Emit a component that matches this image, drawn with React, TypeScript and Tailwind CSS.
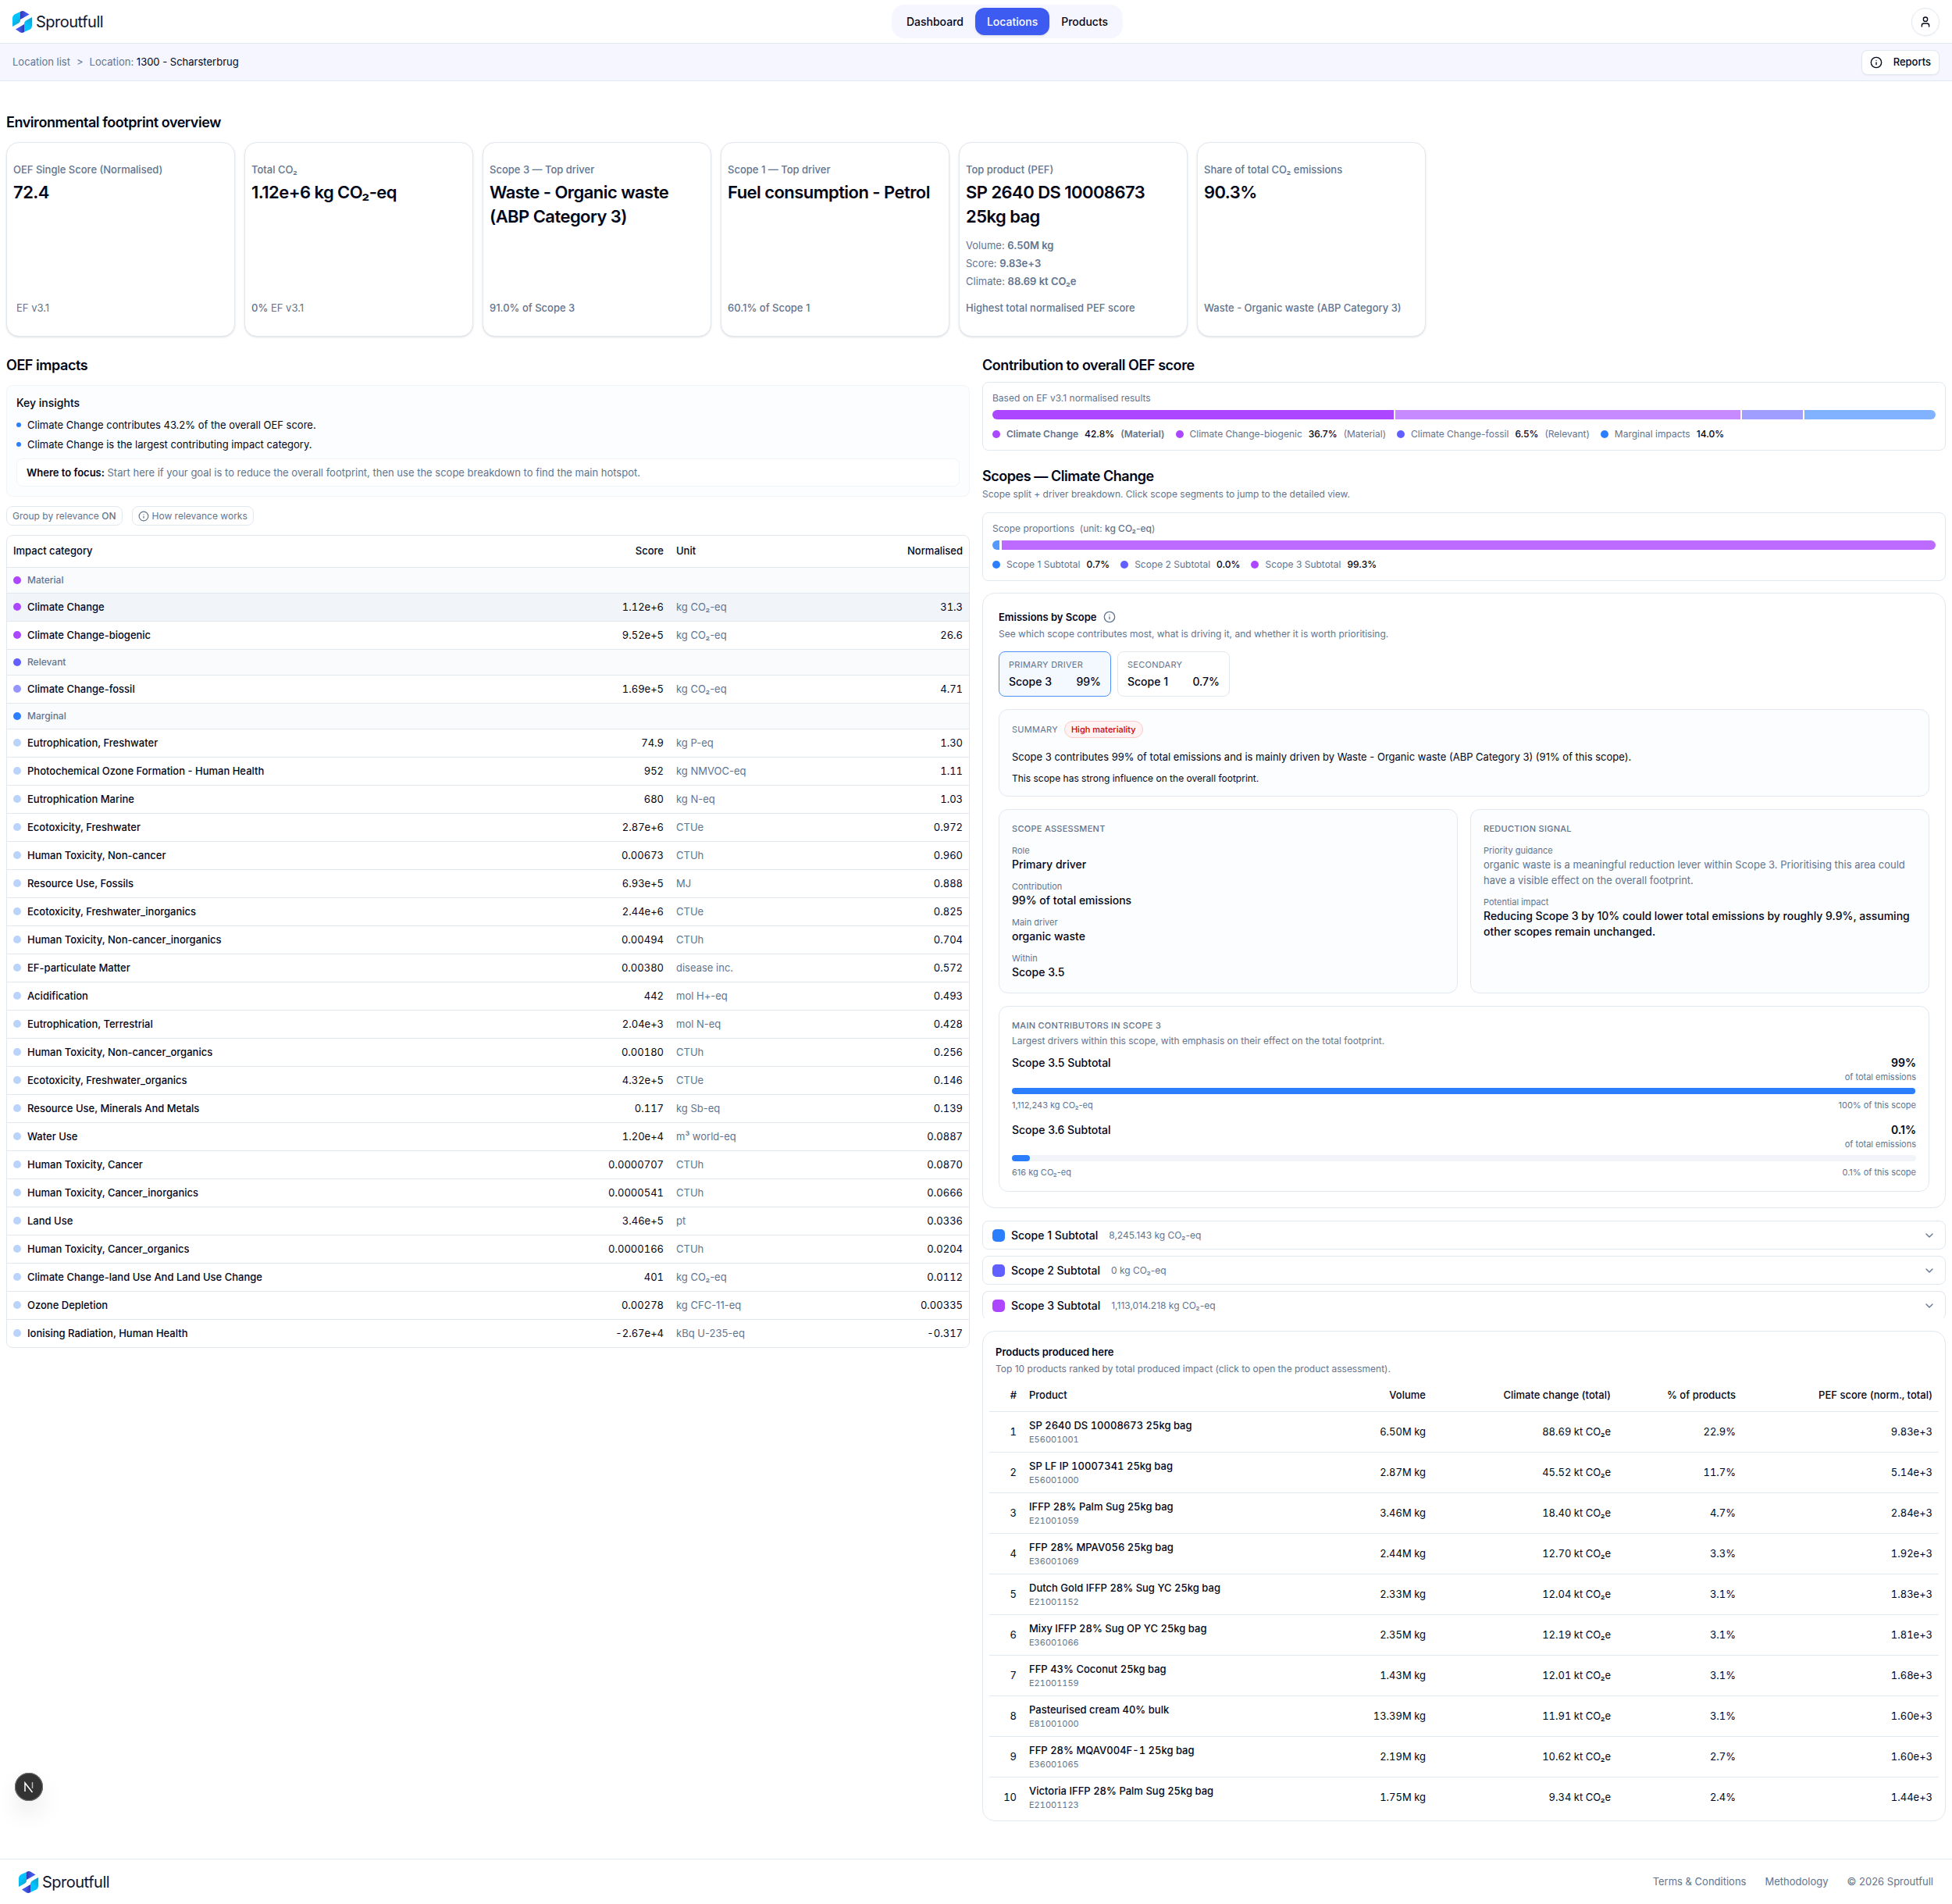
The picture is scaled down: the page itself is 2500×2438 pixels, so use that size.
import { ReactNode } from "react";
import { ChevronDown, Info, User } from "lucide-react";

type Impact = [string, string, string, string];

const material: Impact[] = [
  ["Climate Change", "1.12e+6", "kg CO₂-eq", "31.3"],
  ["Climate Change-biogenic", "9.52e+5", "kg CO₂-eq", "26.6"],
];

const relevant: Impact[] = [
  ["Climate Change-fossil", "1.69e+5", "kg CO₂-eq", "4.71"],
];

const marginal: Impact[] = [
  ["Eutrophication, Freshwater", "74.9", "kg P-eq", "1.30"],
  ["Photochemical Ozone Formation - Human Health", "952", "kg NMVOC-eq", "1.11"],
  ["Eutrophication Marine", "680", "kg N-eq", "1.03"],
  ["Ecotoxicity, Freshwater", "2.87e+6", "CTUe", "0.972"],
  ["Human Toxicity, Non-cancer", "0.00673", "CTUh", "0.960"],
  ["Resource Use, Fossils", "6.93e+5", "MJ", "0.888"],
  ["Ecotoxicity, Freshwater_inorganics", "2.44e+6", "CTUe", "0.825"],
  ["Human Toxicity, Non-cancer_inorganics", "0.00494", "CTUh", "0.704"],
  ["EF-particulate Matter", "0.00380", "disease inc.", "0.572"],
  ["Acidification", "442", "mol H+-eq", "0.493"],
  ["Eutrophication, Terrestrial", "2.04e+3", "mol N-eq", "0.428"],
  ["Human Toxicity, Non-cancer_organics", "0.00180", "CTUh", "0.256"],
  ["Ecotoxicity, Freshwater_organics", "4.32e+5", "CTUe", "0.146"],
  ["Resource Use, Minerals And Metals", "0.117", "kg Sb-eq", "0.139"],
  ["Water Use", "1.20e+4", "m³ world-eq", "0.0887"],
  ["Human Toxicity, Cancer", "0.0000707", "CTUh", "0.0870"],
  ["Human Toxicity, Cancer_inorganics", "0.0000541", "CTUh", "0.0666"],
  ["Land Use", "3.46e+5", "pt", "0.0336"],
  ["Human Toxicity, Cancer_organics", "0.0000166", "CTUh", "0.0204"],
  ["Climate Change-land Use And Land Use Change", "401", "kg CO₂-eq", "0.0112"],
  ["Ozone Depletion", "0.00278", "kg CFC-11-eq", "0.00335"],
  ["Ionising Radiation, Human Health", "-2.67e+4", "kBq U-235-eq", "-0.317"],
];

const groups = [
  { name: "Material", dot: "bg-[#ad46ff]", rowDot: "bg-[#ad46ff]", rows: material },
  { name: "Relevant", dot: "bg-[#615fff]", rowDot: "bg-[#9694ff]", rows: relevant },
  { name: "Marginal", dot: "bg-[#2b7fff]", rowDot: "bg-[#bad3fb]", rows: marginal },
];

const products = [
  ["SP 2640 DS 10008673 25kg bag", "E56001001", "6.50M kg", "88.69 kt CO₂e", "22.9%", "9.83e+3"],
  ["SP LF IP 10007341 25kg bag", "E56001000", "2.87M kg", "45.52 kt CO₂e", "11.7%", "5.14e+3"],
  ["IFFP 28% Palm Sug 25kg bag", "E21001059", "3.46M kg", "18.40 kt CO₂e", "4.7%", "2.84e+3"],
  ["FFP 28% MPAV056 25kg bag", "E36001069", "2.44M kg", "12.70 kt CO₂e", "3.3%", "1.92e+3"],
  ["Dutch Gold IFFP 28% Sug YC 25kg bag", "E21001152", "2.33M kg", "12.04 kt CO₂e", "3.1%", "1.83e+3"],
  ["Mixy IFFP 28% Sug OP YC 25kg bag", "E36001066", "2.35M kg", "12.19 kt CO₂e", "3.1%", "1.81e+3"],
  ["FFP 43% Coconut 25kg bag", "E21001159", "1.43M kg", "12.01 kt CO₂e", "3.1%", "1.68e+3"],
  ["Pasteurised cream 40% bulk", "E81001000", "13.39M kg", "11.91 kt CO₂e", "3.1%", "1.60e+3"],
  ["FFP 28% MQAV004F-1 25kg bag", "E36001065", "2.19M kg", "10.62 kt CO₂e", "2.7%", "1.60e+3"],
  ["Victoria IFFP 28% Palm Sug 25kg bag", "E21001123", "1.75M kg", "9.34 kt CO₂e", "2.4%", "1.44e+3"],
];

function Logo({ id }: { id: string }) {
  return (
    <a href="#" className="flex items-center gap-[5px] text-[#0f172b]">
      <svg className="h-7 w-[25px]" viewBox="0 0 50 56" aria-hidden="true">
        <defs>
          <linearGradient id={`${id}-a`} x1="0.3" y1="0.2" x2="0.7" y2="1">
            <stop offset="0.3" stopColor="#00c3ff" />
            <stop offset="1" stopColor="#1a9ec9" />
          </linearGradient>
          <linearGradient id={`${id}-b`} x1="0" y1="0" x2="1" y2="0">
            <stop offset="0" stopColor="#3038b0" />
            <stop offset="0.6" stopColor="#4358f0" />
          </linearGradient>
          <linearGradient id={`${id}-c`} x1="0.7" y1="0" x2="0.3" y2="0.8">
            <stop offset="0" stopColor="#1a9ec9" />
            <stop offset="0.7" stopColor="#00c3ff" />
          </linearGradient>
          <linearGradient id={`${id}-d`} x1="1" y1="0" x2="0" y2="0">
            <stop offset="0" stopColor="#3038b0" />
            <stop offset="0.6" stopColor="#4358f0" />
          </linearGradient>
        </defs>
        <path d="M0 18Q0 12 5 9L20 2V24Q20 28 16 31L0 40Z" fill={`url(#${id}-a)`} />
        <path d="M20 2Q25-1 30 1L43 9L20 22Z" fill={`url(#${id}-b)`} />
        <path d="M50 16V38Q50 44 45 47L30 54V32Q30 28 34 25Z" fill={`url(#${id}-c)`} />
        <path d="M30 34V54Q25 57 20 55L8 47Z" fill={`url(#${id}-d)`} />
      </svg>
      <span className="text-xl leading-7 tracking-tight">Sproutfull</span>
    </a>
  );
}

function SectionTitle({ children }: { children: ReactNode }) {
  return <h2 className="text-lg leading-[26px] font-semibold tracking-tight">{children}</h2>;
}

function Card({ label, value, foot, children }: { label: string; value: string; foot: ReactNode; children?: ReactNode }) {
  return (
    <div className="flex h-[249px] w-[293px] flex-col rounded-2xl border border-slate-200 bg-white px-2 py-6 shadow-sm">
      <p className="text-[13px] leading-5 font-medium text-slate-500">{label}</p>
      <p className="mt-1 text-[22px] leading-[31px] font-semibold tracking-tight">{value}</p>
      {children}
      <div className="mt-auto text-[13px] leading-6 text-slate-500">{foot}</div>
    </div>
  );
}

function Dot({ color }: { color: string }) {
  return <span className={`inline-block size-2.5 shrink-0 rounded-full ${color}`} />;
}

function Legend({ color, name, value, note, bold }: { color: string; name: string; value: string; note?: string; bold?: boolean }) {
  return (
    <button className={`flex items-center gap-2 ${bold ? "font-semibold" : ""}`}>
      <Dot color={color} />
      <span>{name}</span>
      <span className="font-medium text-[#020618]">{value}</span>
      {note && <span>{note}</span>}
    </button>
  );
}

function Field({ label, children }: { label: string; children: ReactNode }) {
  return (
    <div>
      <dt className="text-[11px] leading-4 text-slate-500">{label}</dt>
      <dd className="text-sm leading-5 font-medium">{children}</dd>
    </div>
  );
}

function Contributor({ name, share, amount, ofScope, width }: { name: string; share: string; amount: string; ofScope: string; width: string }) {
  return (
    <div>
      <div className="flex items-start justify-between">
        <p className="text-sm leading-5 font-medium">{name}</p>
        <div className="text-right">
          <p className="text-sm leading-5 font-semibold">{share}</p>
          <p className="text-[11px] leading-4 text-slate-500">of total emissions</p>
        </div>
      </div>
      <div className="mt-1.5 h-2 rounded-full bg-slate-100">
        <div className="h-2 rounded-full bg-[#2b7fff]" style={{ width }} />
      </div>
      <div className="mt-1.5 flex justify-between text-[11px] leading-4 text-slate-500">
        <span>{amount}</span>
        <span>{ofScope}</span>
      </div>
    </div>
  );
}

function Subtotal({ color, name, amount, open }: { color: string; name: string; amount: string; open?: boolean }) {
  return (
    <button className={`flex h-[37px] w-full items-center rounded-lg border border-slate-200 px-3 ${open ? "border-b-transparent" : ""}`}>
      <span className={`size-4 rounded-[5px] ${color}`} />
      <span className="ml-2 text-sm font-medium">{name}</span>
      <span className="ml-3.5 text-xs text-slate-500">{amount}</span>
      <ChevronDown className="ml-auto size-4 text-slate-500" />
    </button>
  );
}

export default function App() {
  return (
    <div className="min-h-screen bg-white font-[Inter,sans-serif] text-sm text-[#020618]">
      <header className="flex h-14 items-center justify-between border-b border-slate-200 px-4">
        <Logo id="top" />
        <nav className="flex rounded-2xl bg-[#f5f6ff] p-1 font-medium">
          <a href="#" className="flex h-[35px] items-center rounded-xl px-[15px]">Dashboard</a>
          <a href="#" className="flex h-[35px] items-center rounded-xl bg-[#3d5af1] px-[15px] text-white shadow-sm">Locations</a>
          <a href="#" className="flex h-[35px] items-center rounded-xl px-[15px]">Products</a>
        </nav>
        <button aria-label="Account" className="flex size-9 items-center justify-center rounded-full border border-slate-200 shadow-xs">
          <User className="size-4" />
        </button>
      </header>

      <div className="flex h-12 items-center justify-between border-b border-slate-200 bg-[#f5f6ff] px-4">
        <div className="flex gap-2 text-[13px] text-slate-500">
          <a href="#">Location list</a>
          <span>&gt;</span>
          <span>
            Location: <span className="text-[#020618]">1300 - Scharsterbrug</span>
          </span>
        </div>
        <button className="flex h-8 items-center gap-3.5 rounded-lg border border-slate-200 bg-white px-2.5 text-[13px] font-medium shadow-xs">
          <Info className="size-4" />
          Reports
        </button>
      </div>

      <main className="px-2 pt-10">
        <SectionTitle>Environmental footprint overview</SectionTitle>
        <section className="mt-3 flex flex-wrap gap-3">
          <Card label="OEF Single Score (Normalised)" value="72.4" foot={<span className="ml-1">EF v3.1</span>} />
          <Card label="Total CO₂" value="1.12e+6 kg CO₂-eq" foot={<><span className="font-medium">0%</span> EF v3.1</>} />
          <Card label="Scope 3 — Top driver" value="Waste - Organic waste (ABP Category 3)" foot={<span className="font-medium">91.0% of Scope 3</span>} />
          <Card label="Scope 1 — Top driver" value="Fuel consumption - Petrol" foot={<span className="font-medium">60.1% of Scope 1</span>} />
          <Card label="Top product (PEF)" value="SP 2640 DS 10008673 25kg bag" foot={<span className="font-medium">Highest total normalised PEF score</span>}>
            <div className="mt-2.5 text-[13px] leading-[23px] text-slate-500">
              <p>Volume: <span className="font-semibold">6.50M kg</span></p>
              <p>Score: <span className="font-semibold">9.83e+3</span></p>
              <p>Climate: <span className="font-semibold">88.69 kt CO₂e</span></p>
            </div>
          </Card>
          <Card label="Share of total CO₂ emissions" value="90.3%" foot={<span className="font-medium">Waste - Organic waste (ABP Category 3)</span>} />
        </section>

        <div className="mt-6 grid grid-cols-2 gap-4">
          <section className="min-w-0">
            <SectionTitle>OEF impacts</SectionTitle>
            <div className="mt-3 rounded-lg border border-slate-100 bg-[#fcfdfe] p-3">
              <h3 className="leading-5 font-medium">Key insights</h3>
              <ul className="mt-2 space-y-[5px] text-[13px] leading-5">
                <li className="flex items-center gap-2"><span className="size-1.5 rounded-full bg-[#2b7fff]" />Climate Change contributes 43.2% of the overall OEF score.</li>
                <li className="flex items-center gap-2"><span className="size-1.5 rounded-full bg-[#2b7fff]" />Climate Change is the largest contributing impact category.</li>
              </ul>
              <p className="mt-2 rounded-lg border border-slate-100 bg-white px-3 py-2 text-[13px] leading-[18px] text-slate-500">
                <span className="font-semibold text-[#020618]">Where to focus:</span> Start here if your goal is to reduce the overall footprint, then use the scope breakdown to find the main hotspot.
              </p>
            </div>
            <div className="mt-3 flex gap-3 text-xs text-slate-500">
              <button className="h-[25px] rounded-lg border border-slate-200 px-[7px]">Group by relevance <span className="font-medium">ON</span></button>
              <button className="flex h-[25px] items-center gap-1 rounded-lg border border-slate-200 px-[7px]">
                <Info className="size-3.5" />
                How relevance works
              </button>
            </div>
            <div className="mt-3 overflow-hidden rounded-lg border border-slate-200">
              <table className="w-full text-[13px]">
                <thead>
                  <tr className="h-10">
                    <th className="px-2 text-left font-medium">Impact category</th>
                    <th className="w-[168px] px-2 text-right font-medium">Score</th>
                    <th className="w-[215px] px-2 text-left font-medium">Unit</th>
                    <th className="w-[168px] px-2 text-right font-medium">Normalised</th>
                  </tr>
                </thead>
                {groups.map((group) => (
                  <tbody key={group.name}>
                    <tr className="h-[33px] border-t border-slate-200 bg-[#f9fbfd]">
                      <td colSpan={4} className="px-2 text-xs font-medium text-slate-500">
                        <span className="flex items-center gap-2"><Dot color={group.dot} />{group.name}</span>
                      </td>
                    </tr>
                    {group.rows.map(([name, score, unit, norm]) => (
                      <tr key={name} className={`h-9 border-t border-slate-200 ${name === "Climate Change" ? "bg-slate-100" : ""}`}>
                        <td className="px-2 font-medium">
                          <span className="flex items-center gap-2"><Dot color={group.rowDot} />{name}</span>
                        </td>
                        <td className="px-2 text-right tabular-nums">{score}</td>
                        <td className="px-2 text-slate-500">{unit}</td>
                        <td className="px-2 text-right tabular-nums">{norm}</td>
                      </tr>
                    ))}
                  </tbody>
                ))}
              </table>
            </div>
          </section>

          <section className="min-w-0">
            <SectionTitle>Contribution to overall OEF score</SectionTitle>
            <div className="mt-2 rounded-lg border border-slate-200 p-3 text-xs text-slate-500">
              <p>Based on EF v3.1 normalised results</p>
              <div className="mt-[7px] flex h-3 gap-0.5 overflow-hidden rounded-full">
                <div className="bg-[#ad46ff]" style={{ width: "42.8%" }} />
                <div className="bg-[#c88bff]" style={{ width: "36.7%" }} />
                <div className="bg-[#a09fff]" style={{ width: "6.5%" }} />
                <div className="bg-[#80b2ff]" style={{ width: "14%" }} />
              </div>
              <div className="mt-[11px] flex gap-3.5">
                <Legend color="bg-[#ad46ff]" name="Climate Change" value="42.8%" note="(Material)" bold />
                <Legend color="bg-[#ad46ff]" name="Climate Change-biogenic" value="36.7%" note="(Material)" />
                <Legend color="bg-[#615fff]" name="Climate Change-fossil" value="6.5%" note="(Relevant)" />
                <Legend color="bg-[#2b7fff]" name="Marginal impacts" value="14.0%" />
              </div>
            </div>

            <div className="mt-5">
              <SectionTitle>Scopes — Climate Change</SectionTitle>
              <p className="mt-0.5 text-xs text-slate-500">Scope split + driver breakdown. Click scope segments to jump to the detailed view.</p>
            </div>
            <div className="mt-[15px] rounded-lg border border-slate-200 p-3 text-xs text-slate-500">
              <p>Scope proportions &nbsp;(unit: <span className="font-medium">kg CO₂-eq</span>)</p>
              <div className="mt-[7px] flex h-3 gap-[3px] overflow-hidden rounded-full">
                <div className="bg-[#5599ff]" style={{ width: "0.74%" }} />
                <div className="flex-1 bg-[#bd6bff]" />
              </div>
              <div className="mt-[11px] flex gap-3.5">
                <Legend color="bg-[#2b7fff]" name="Scope 1 Subtotal" value="0.7%" />
                <Legend color="bg-[#615fff]" name="Scope 2 Subtotal" value="0.0%" />
                <Legend color="bg-[#ad46ff]" name="Scope 3 Subtotal" value="99.3%" />
              </div>
            </div>

            <div className="mt-[15px] rounded-2xl border border-slate-200 p-5">
              <h3 className="flex items-center gap-2 text-[13px] leading-5 font-semibold">
                Emissions by Scope
                <Info className="size-4 text-slate-500" />
              </h3>
              <p className="mt-1 text-xs text-slate-500">See which scope contributes most, what is driving it, and whether it is worth prioritising.</p>
              <div className="mt-3.5 flex gap-2">
                <button className="w-36 rounded-lg border border-[#5192f8] bg-[#f4f8ff] px-3 py-2 text-left">
                  <span className="block text-[11px] leading-4 tracking-wide text-slate-500">PRIMARY DRIVER</span>
                  <span className="mt-1 flex justify-between leading-5 font-medium"><span>Scope 3</span><span>99%</span></span>
                </button>
                <button className="w-36 rounded-lg border border-slate-200 px-3 py-2 text-left">
                  <span className="block text-[11px] leading-4 tracking-wide text-slate-500">SECONDARY</span>
                  <span className="mt-1 flex justify-between leading-5 font-medium"><span>Scope 1</span><span>0.7%</span></span>
                </button>
              </div>

              <div className="mt-4 rounded-xl border border-slate-200 bg-[#fcfdfe] px-4 py-3.5">
                <div className="flex items-center gap-2">
                  <span className="text-[11px] leading-4 tracking-wide text-slate-500">SUMMARY</span>
                  <span className="rounded-full border border-[#ffc9c9] bg-red-50 px-2 py-0.5 text-[11px] leading-4 font-medium text-red-700">High materiality</span>
                </div>
                <p className="mt-3.5 text-[13px] leading-5">Scope 3 contributes 99% of total emissions and is mainly driven by Waste - Organic waste (ABP Category 3) (91% of this scope).</p>
                <p className="mt-2.5 text-xs">This scope has strong influence on the overall footprint.</p>
              </div>

              <div className="mt-4 grid grid-cols-2 gap-4">
                <div className="rounded-xl border border-slate-200 bg-[#fcfdfe] p-4">
                  <h4 className="text-[11px] leading-4 font-medium tracking-wide text-slate-500">SCOPE ASSESSMENT</h4>
                  <dl className="mt-3 space-y-2.5">
                    <Field label="Role">Primary driver</Field>
                    <Field label="Contribution">99% of total emissions</Field>
                    <Field label="Main driver">organic waste</Field>
                    <Field label="Within">Scope 3.5</Field>
                  </dl>
                </div>
                <div className="rounded-xl border border-slate-200 bg-[#fcfdfe] p-4">
                  <h4 className="text-[11px] leading-4 font-medium tracking-wide text-slate-500">REDUCTION SIGNAL</h4>
                  <dl className="mt-3 space-y-2.5">
                    <Field label="Priority guidance">
                      <p className="text-[13px] leading-5 font-normal text-slate-500">organic waste is a meaningful reduction lever within Scope 3. Prioritising this area could have a visible effect on the overall footprint.</p>
                    </Field>
                    <Field label="Potential impact">Reducing Scope 3 by 10% could lower total emissions by roughly 9.9%, assuming other scopes remain unchanged.</Field>
                  </dl>
                </div>
              </div>

              <div className="mt-4 rounded-xl border border-slate-200 p-4">
                <h4 className="text-[11px] leading-4 font-medium tracking-wide text-slate-500">MAIN CONTRIBUTORS IN SCOPE 3</h4>
                <p className="mt-1 text-xs text-slate-500">Largest drivers within this scope, with emphasis on their effect on the total footprint.</p>
                <div className="mt-2.5 space-y-3.5">
                  <Contributor name="Scope 3.5 Subtotal" share="99%" amount="1,112,243 kg CO₂-eq" ofScope="100% of this scope" width="99.9%" />
                  <Contributor name="Scope 3.6 Subtotal" share="0.1%" amount="616 kg CO₂-eq" ofScope="0.1% of this scope" width="2%" />
                </div>
              </div>
            </div>

            <div className="mt-4 space-y-2">
              <Subtotal color="bg-[#2b7fff]" name="Scope 1 Subtotal" amount="8,245.143 kg CO₂-eq" />
              <Subtotal color="bg-[#615fff]" name="Scope 2 Subtotal" amount="0 kg CO₂-eq" />
              <Subtotal color="bg-[#ad46ff]" name="Scope 3 Subtotal" amount="1,113,014.218 kg CO₂-eq" open />
            </div>

            <div className="mt-3.5 rounded-2xl border border-slate-200 px-2 pt-4 pb-1">
              <h3 className="px-2 text-[13px] leading-5 font-semibold">Products produced here</h3>
              <p className="mt-1 px-2 text-xs text-slate-500">Top 10 products ranked by total produced impact (click to open the product assessment).</p>
              <table className="mt-1.5 w-full text-[13px] tabular-nums">
                <thead>
                  <tr className="h-10">
                    <th className="w-[43px] px-2 text-right font-medium">#</th>
                    <th className="px-2 text-left font-medium">Product</th>
                    <th className="w-[168px] px-2 text-right font-medium">Volume</th>
                    <th className="w-[237px] px-2 text-right font-medium">Climate change (total)</th>
                    <th className="w-[160px] px-2 text-right font-medium">% of products</th>
                    <th className="w-[252px] px-2 text-right font-medium">PEF score (norm., total)</th>
                  </tr>
                </thead>
                <tbody>
                  {products.map(([name, code, volume, climate, share, score], i) => (
                    <tr key={code} className="h-[52px] border-t border-slate-200">
                      <td className="px-2 text-right">{i + 1}</td>
                      <td className="px-2">
                        <a href="#" className="block leading-5 font-medium">{name}</a>
                        <span className="block text-[11px] leading-4 text-slate-500">{code}</span>
                      </td>
                      <td className="px-2 text-right">{volume}</td>
                      <td className="px-2 text-right">{climate}</td>
                      <td className="px-2 text-right">{share}</td>
                      <td className="px-2 text-right">{score}</td>
                    </tr>
                  ))}
                </tbody>
              </table>
            </div>
          </section>
        </div>
      </main>

      <footer className="mt-12 flex h-[58px] items-center justify-between border-t border-slate-200 px-6">
        <Logo id="bottom" />
        <div className="flex gap-6 text-[13px] text-slate-500">
          <a href="#">Terms &amp; Conditions</a>
          <a href="#">Methodology</a>
          <span>© 2026 Sproutfull</span>
        </div>
      </footer>

      <button aria-label="Open dev tools" className="fixed bottom-[132px] left-[19px] flex size-9 items-center justify-center rounded-full bg-[#333] ring-1 ring-neutral-500 ring-inset shadow-[0_16px_32px_-8px_rgba(0,0,0,0.25)]">
        <svg className="size-4" viewBox="0 0 16 16" fill="none" stroke="white" strokeWidth="1.5" aria-hidden="true">
          <path d="M3 14V3L12.500 15" />
          <path d="M12.500 2V10" stroke="#bbb" />
        </svg>
      </button>
    </div>
  );
}
